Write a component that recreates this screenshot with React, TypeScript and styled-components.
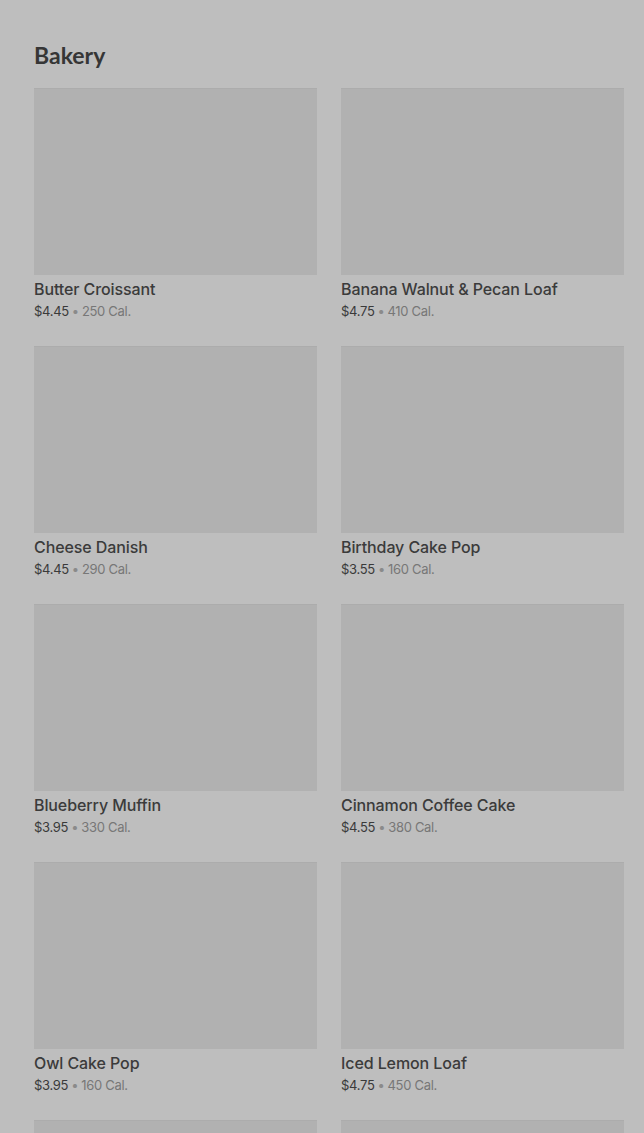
import React from "react";
import styled, { createGlobalStyle } from "styled-components";

const Global = createGlobalStyle`
  html, body { margin: 0; padding: 0; background: #bebebe; }
  body { overflow: hidden; }
`;

const Page = styled.main`
  height: 1133px;
  overflow: hidden;
  background: #bebebe;
  padding: 40px 20px 0 34px;
  box-sizing: border-box;
`;

const Title = styled.h2`
  margin: 0 0 18px;
  font-family: "Lato", "Open Sans", sans-serif;
  font-weight: 700;
  font-size: 23px;
  line-height: 30px;
  color: #363636;
`;

const Grid = styled.div`
  display: grid;
  grid-template-columns: 1fr 1fr;
  column-gap: 24px;
  row-gap: 24px;
`;

const Card = styled.article`
  display: flex;
  flex-direction: column;
  font-family: "Inter", "Roboto", sans-serif;
`;

const Thumb = styled.div`
  height: 187px;
  background: #b1b1b1;
  border-top: 1px solid #acacac;
  box-sizing: border-box;
`;

const Name = styled.div`
  margin-top: 3px;
  font-size: 16px;
  font-weight: 500;
  line-height: 22px;
  color: #3b3b3b;
  letter-spacing: -0.1px;
`;

const Meta = styled.div`
  font-size: 13px;
  line-height: 23px;
  height: 22px;
  color: #3a3a3a;
  letter-spacing: -0.3px;
`;

const Dot = styled.span`
  color: #8a8a8a;
  margin: 0 3px;
`;

const Cal = styled.span`
  color: #777777;
`;

type Item = { name?: string; price?: string; cal?: string };

const items: Item[] = [
  { name: "Butter Croissant", price: "$4.45", cal: "250 Cal." },
  { name: "Banana Walnut & Pecan Loaf", price: "$4.75", cal: "410 Cal." },
  { name: "Cheese Danish", price: "$4.45", cal: "290 Cal." },
  { name: "Birthday Cake Pop", price: "$3.55", cal: "160 Cal." },
  { name: "Blueberry Muffin", price: "$3.95", cal: "330 Cal." },
  { name: "Cinnamon Coffee Cake", price: "$4.55", cal: "380 Cal." },
  { name: "Owl Cake Pop", price: "$3.95", cal: "160 Cal." },
  { name: "Iced Lemon Loaf", price: "$4.75", cal: "450 Cal." },
  {},
  {},
];

export default function App() {
  return (
    <>
      <Global />
      <Page>
        <Title>Bakery</Title>
        <Grid>
          {items.map((it, i) => (
            <Card key={i}>
              <Thumb />
              {it.name && (
                <>
                  <Name>{it.name}</Name>
                  <Meta>
                    {it.price}
                    <Dot>•</Dot>
                    <Cal>{it.cal}</Cal>
                  </Meta>
                </>
              )}
            </Card>
          ))}
        </Grid>
      </Page>
    </>
  );
}
